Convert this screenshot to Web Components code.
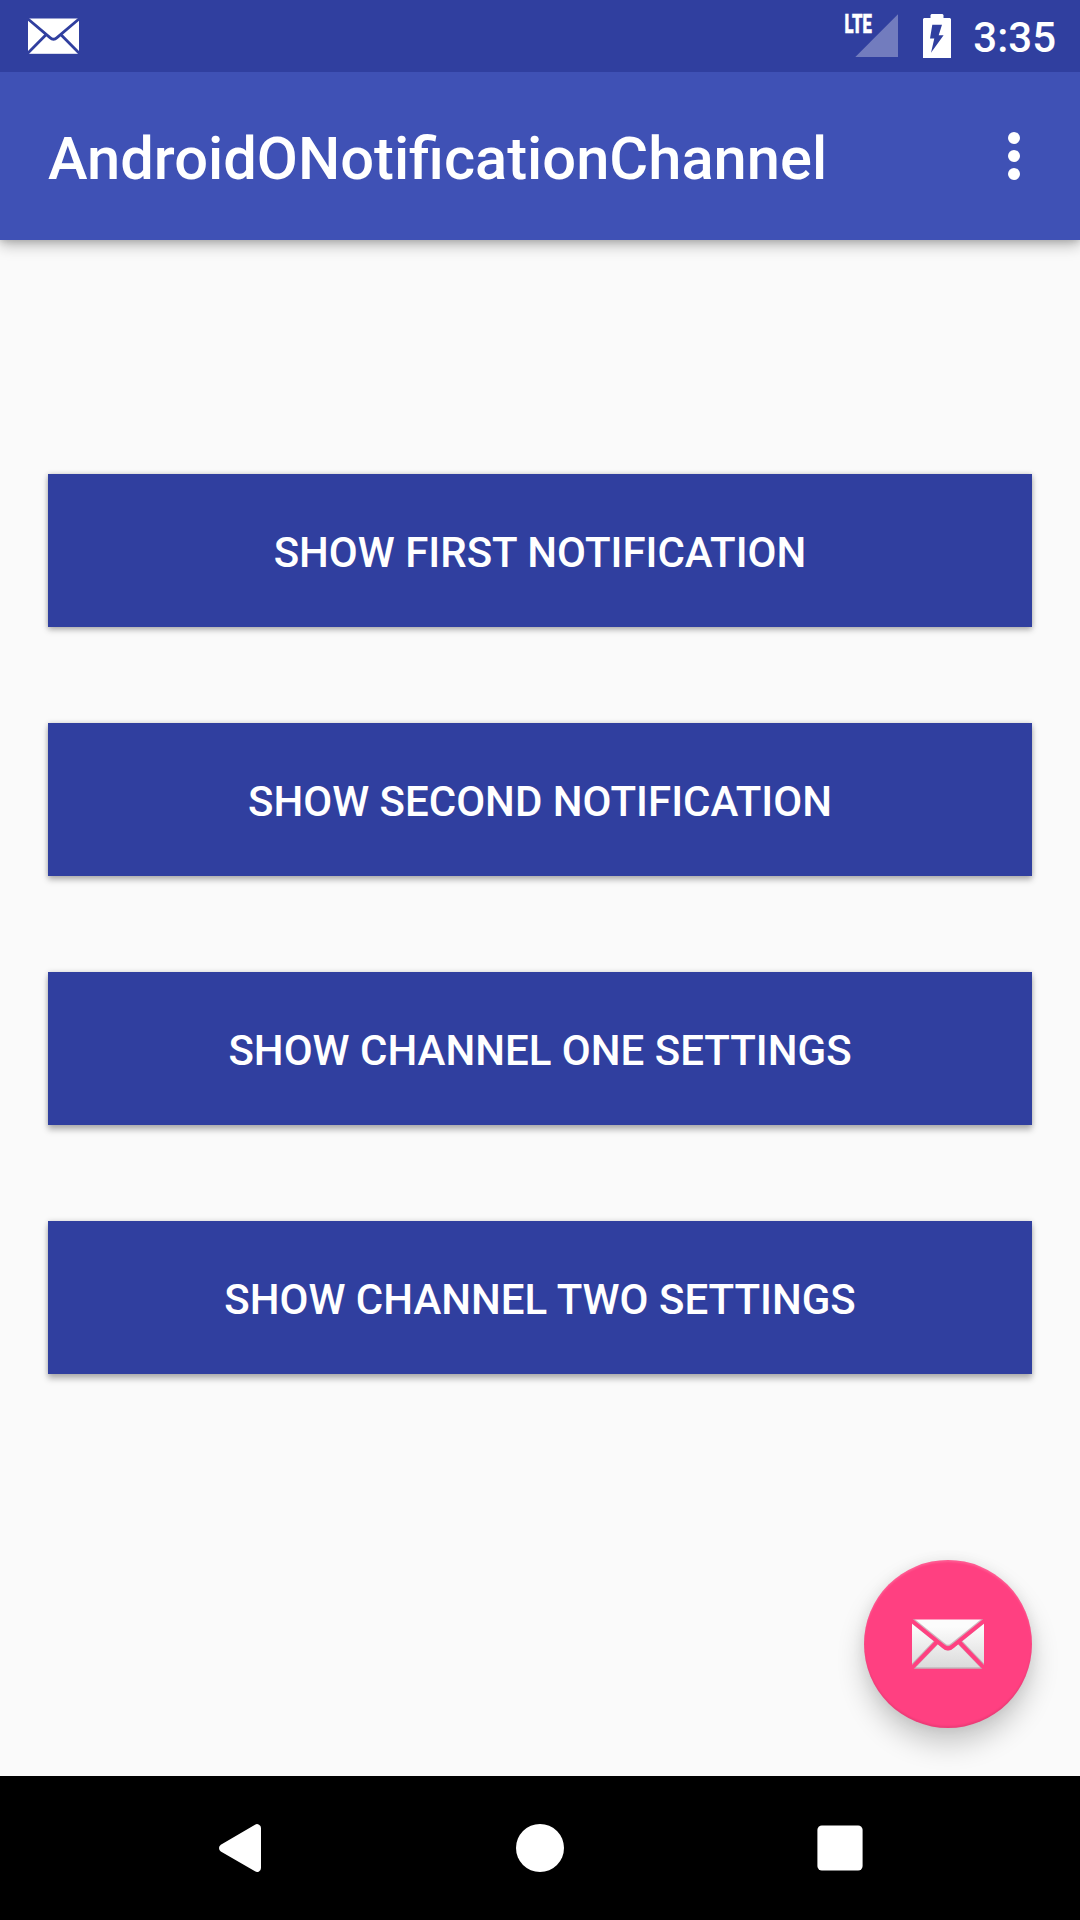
<!DOCTYPE html>
<html lang="en">
<head>
<meta charset="utf-8">
<title>AndroidONotificationChannel</title>
<style>
html,body{margin:0;height:100%}
body{font-family:Roboto,sans-serif;font-weight:500;color:#fff;background:#fafafa}
raised-button{--drop:3px}
raised-button:nth-of-type(2){--drop:4px}
raised-button:nth-of-type(3){--drop:5px}
raised-button:nth-of-type(4){--drop:5px}
</style>
</head>
<body>
<phone-screen>
  <status-bar slot="status"></status-bar>
  <app-toolbar slot="toolbar">AndroidONotificationChannel</app-toolbar>
  <raised-button>SHOW FIRST NOTIFICATION</raised-button>
  <raised-button>SHOW SECOND NOTIFICATION</raised-button>
  <raised-button>SHOW CHANNEL ONE SETTINGS</raised-button>
  <raised-button>SHOW CHANNEL TWO SETTINGS</raised-button>
  <mail-fab slot="fab"></mail-fab>
  <nav-bar slot="nav"></nav-bar>
</phone-screen>
<script>
const define = (name, html) => customElements.define(name, class extends HTMLElement {
  constructor() {
    super();
    this.attachShadow({ mode: 'open' }).innerHTML = html;
  }
});

define('phone-screen', `
<style>
:host{display:flex;flex-direction:column;width:1080px;height:1920px;background:#fafafa;overflow:hidden}
main{flex:1;display:flex;flex-direction:column;padding:234px 48px 48px;box-sizing:border-box}
.list{display:flex;flex-direction:column;gap:96px}
.fab{display:flex;justify-content:flex-end;margin-top:auto}
</style>
<slot name="status"></slot><slot name="toolbar"></slot>
<main><div class="list"><slot></slot></div><div class="fab"><slot name="fab"></slot></div></main>
<slot name="nav"></slot>`);

define('status-bar', `
<style>
:host{display:flex;align-items:center;height:72px;flex:none;background:#303f9f;box-sizing:border-box;padding:0 24px 0 28px;position:relative;z-index:2}
svg{display:block}
.sys{margin-left:auto;display:flex;align-items:center}
.battery{margin:0 22px 0 25px}
.time{font-size:42px;line-height:50px;padding-top:3px}
</style>
<svg width="51" height="36" viewBox="0 0 51 36">
  <rect y=".5" width="51" height="35.3" fill="#fff"/>
  <path d="M-1 .2 22 19.6Q25.5 22.8 29 19.6L52 .2M-1 36 17.5 17.2M52 36 33.5 17.2" fill="none" stroke="#303f9f" stroke-width="2.8"/>
</svg>
<div class="sys">
  <svg width="54" height="72" viewBox="0 0 54 72">
    <path d="M54 14.3V57H11.3Z" fill="#fff" fill-opacity=".32"/>
    <text x="0.6" y="33.4" font-size="25.6" font-weight="900" fill="#fff" stroke="#fff" stroke-width=".5" textLength="27.2" lengthAdjust="spacingAndGlyphs">LTE</text>
  </svg>
  <svg class="battery" width="28" height="72" viewBox="0 0 28 72">
    <path fill="#fff" fill-rule="evenodd" d="M0 19 1 18H7.5V15L8.5 14H19.5L20.5 15V18H27L28 19V58H0ZM9.3 24.8H19L15.7 35.2H20.6L8 52.8 11.3 38.5H7Z"/>
  </svg>
  <span class="time">3:35</span>
</div>`);

define('app-toolbar', `
<style>
:host{display:flex;align-items:center;justify-content:space-between;height:168px;flex:none;box-sizing:border-box;padding:0 60px 0 48px;background:#3f51b5;box-shadow:0 5px 14px rgba(0,0,0,.27),0 1px 7px rgba(0,0,0,.16);position:relative;z-index:1}
span{font-size:59.65px;line-height:70px;padding-top:5px}
svg{display:block}
</style>
<span><slot></slot></span>
<svg width="12" height="48" viewBox="0 0 12 48" fill="#fff"><circle cx="6" cy="6" r="6"/><circle cx="6" cy="24" r="6"/><circle cx="6" cy="42" r="6"/></svg>`);

define('raised-button', `
<style>
:host{display:block;height:153px}
button{all:unset;display:flex;align-items:center;justify-content:center;width:100%;height:100%;box-sizing:border-box;padding-top:4px;background:#303f9f;font-size:42px;line-height:50px;white-space:nowrap;box-shadow:0 var(--drop) 6px rgba(0,0,0,.26),0 0 5px rgba(0,0,0,.16)}
</style>
<button><slot></slot></button>`);

define('mail-fab', `
<style>
:host{display:flex;align-items:center;justify-content:center;width:168px;height:168px;border-radius:50%;background:#ff4081;box-shadow:0 16px 28px rgba(0,0,0,.2),0 1px 14px rgba(0,0,0,.07),inset 0 -2px 2px rgba(0,0,0,.08),inset 0 2px 2px rgba(255,255,255,.15)}
</style>
<svg width="72" height="50" viewBox="0 0 72 50">
  <defs><linearGradient id="paper" x1="0" y1="0" x2="0" y2="1"><stop offset=".15" stop-color="#fcfcfc"/><stop offset="1" stop-color="#dadada"/></linearGradient></defs>
  <rect y=".5" width="72" height="49" fill="url(#paper)"/>
  <path d="M3 49H69" stroke="#b5a5aa"/>
  <path d="M-1 .6 31 26.2Q36 31 41 26.2L73 .6M-1 49.4 24 23.5M73 49.4 48 23.5" fill="none" stroke="#b28a97" stroke-opacity=".6" stroke-width="5.4"/>
  <path d="M-1 1.2 31 27Q36 31.8 41 27L73 1.2M-1 49.8 25.3 22.5M73 49.8 46.7 22.5" fill="none" stroke="#ff4081" stroke-width="4"/>
</svg>`);

define('nav-bar', `
<style>
:host{display:flex;align-items:center;justify-content:center;gap:252px;height:144px;flex:none;background:#000}
</style>
<svg width="48" height="48" viewBox="0 0 48 48"><path fill="#fff" d="M4.8 20.7 39 .7Q41-.5 43 .7 45 1.8 45 4V44Q45 46.2 43 47.4 41 48.5 39 47.3L4.8 27.6Q3 26.4 3 24.1T4.8 20.7Z"/></svg>
<svg width="48" height="48" viewBox="0 0 48 48"><circle cx="24" cy="24" r="24" fill="#fff"/></svg>
<svg width="48" height="48" viewBox="0 0 48 48"><rect x="1.4" y="1.4" width="45.2" height="45.2" rx="4.5" fill="#fff"/></svg>`);
</script>
</body>
</html>
